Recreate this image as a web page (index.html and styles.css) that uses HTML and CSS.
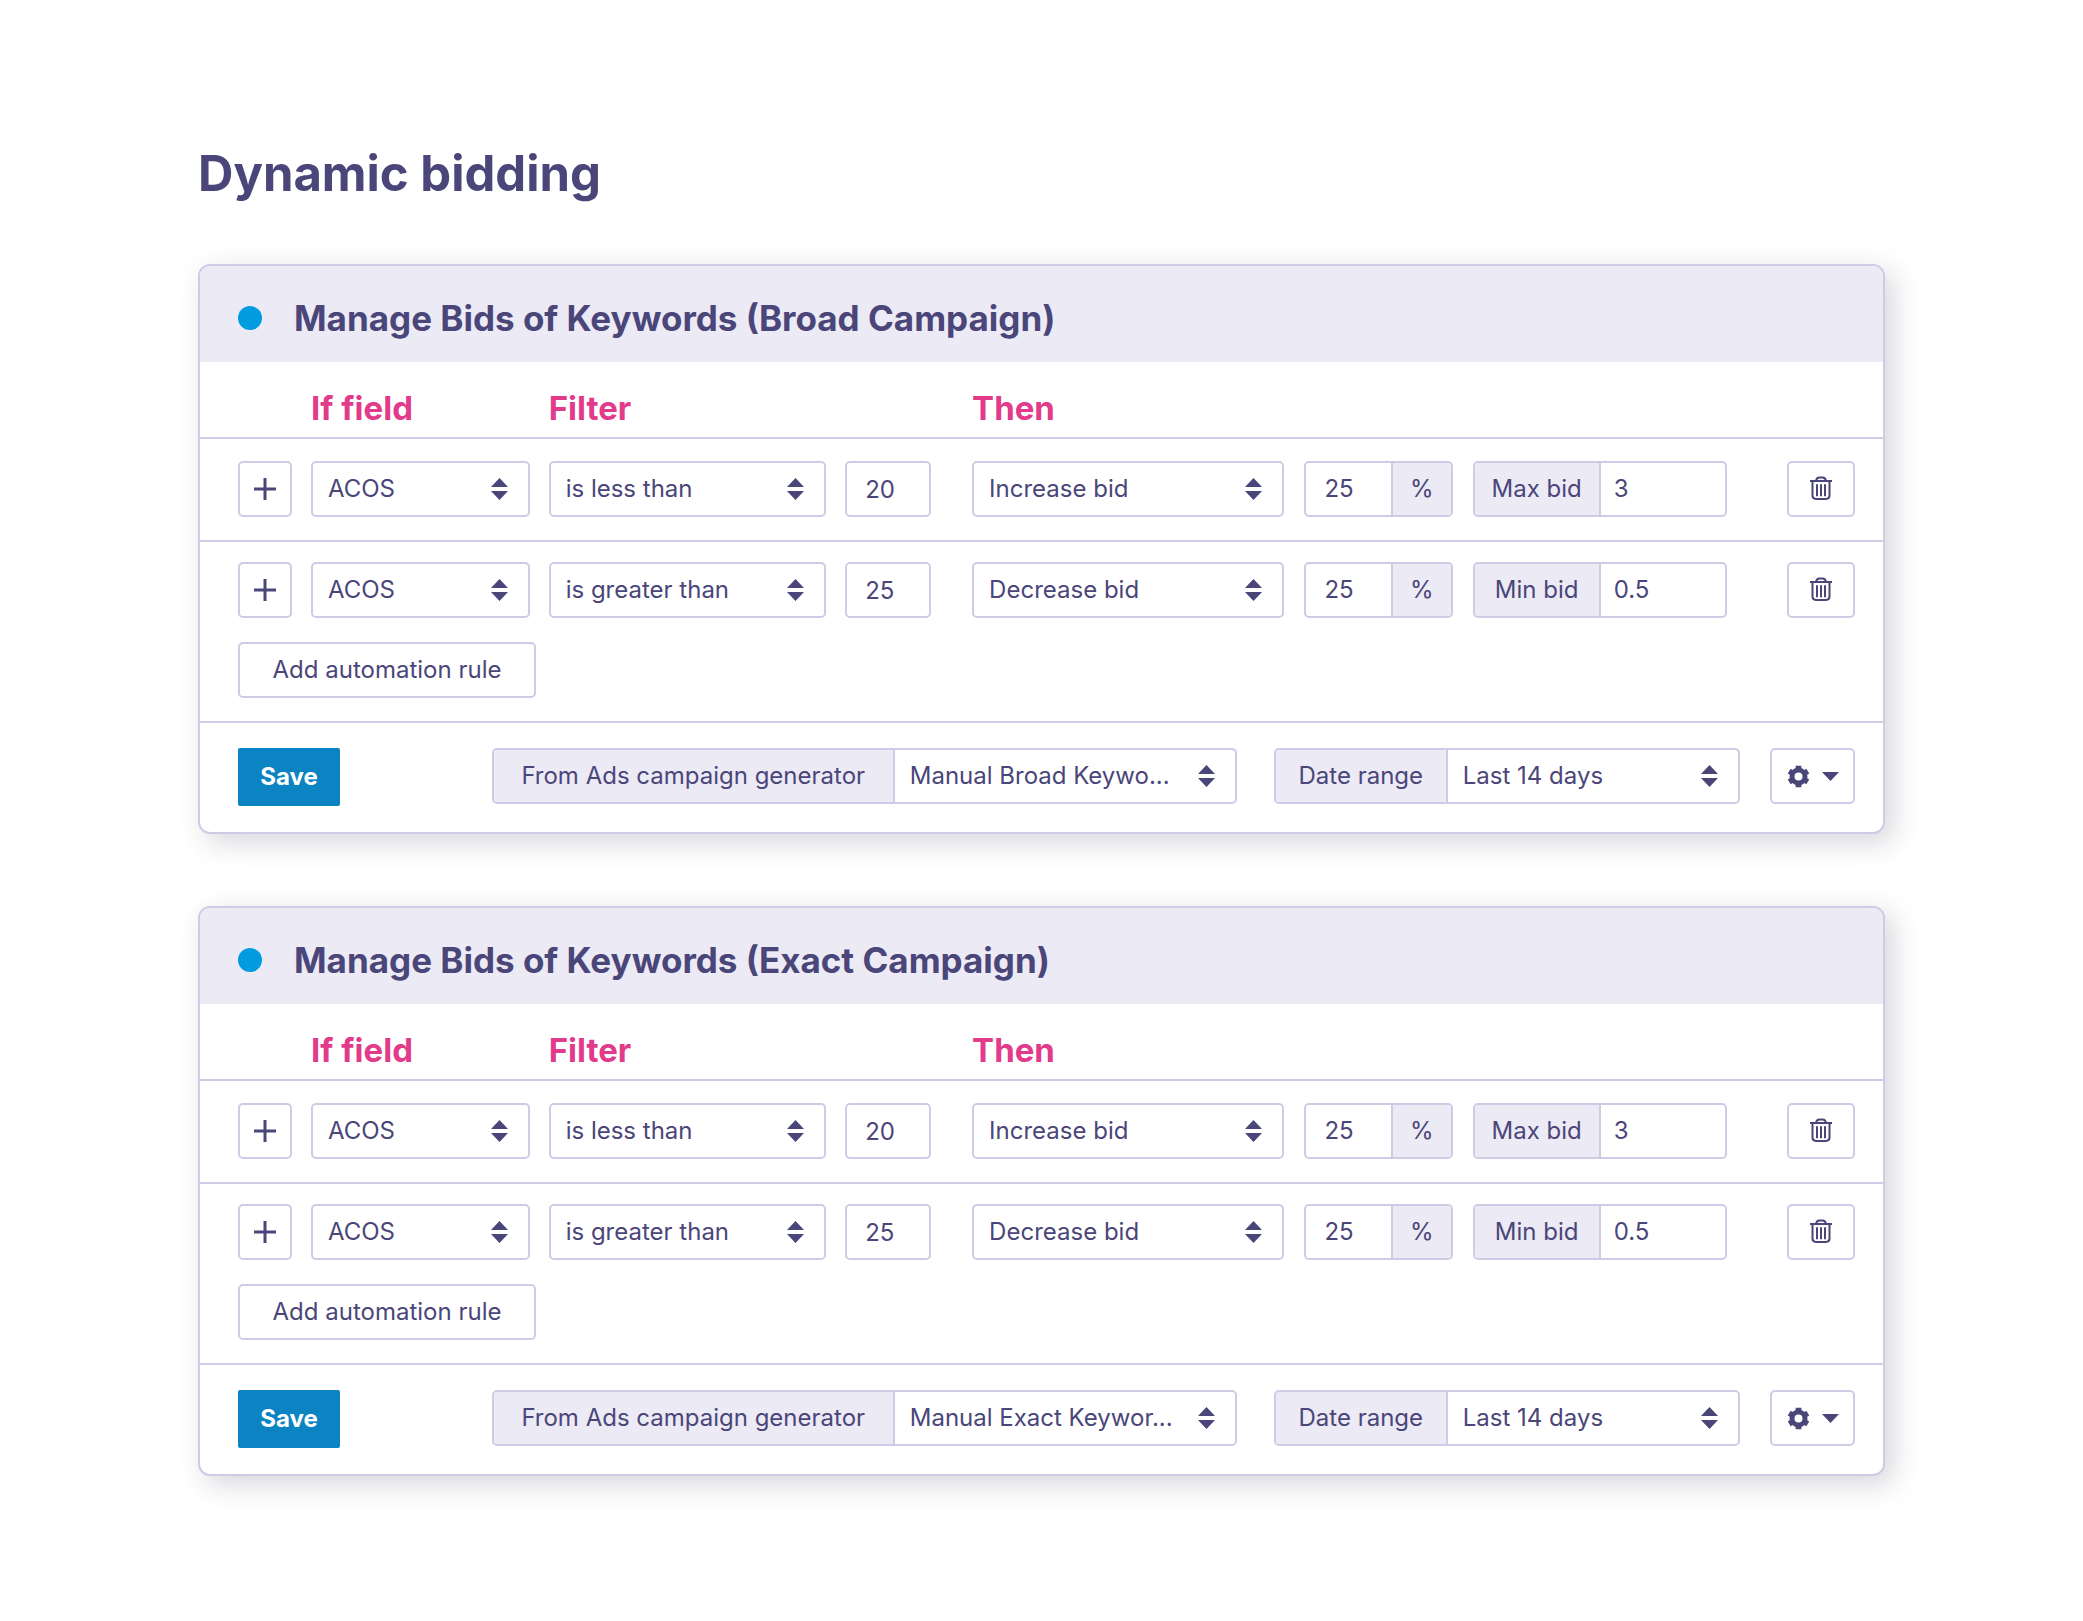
FILE: index.html
```html
<!DOCTYPE html>
<html lang="en">
<head>
<meta charset="utf-8">
<meta name="viewport" content="width=device-width, initial-scale=1">
<title>Dynamic bidding</title>
<link rel="stylesheet" href="styles.css">
</head>
<body>
<svg class="sprite" aria-hidden="true">
  <symbol id="i-sort" viewBox="0 0 17 22"><path d="M8.500 0L17 9H0zM0 13h17l-8.500 9z"/></symbol>
  <symbol id="i-plus" viewBox="0 0 24 24"><path d="M12 1v22M1 12h22" fill="none" stroke="currentColor" stroke-width="3"/></symbol>
  <symbol id="i-trash" viewBox="0 0 22 24"><path d="M0 5h22M6 5c.4-2.600 1.600-3.600 3.400-3.600h3.200c1.800 0 3 1 3.400 3.600M2.500 5v14.500q0 3.400 3.400 3.400h10.200q3.400 0 3.400-3.400V5M7 8.300v12M11 8.300v12M15 8.300v12" fill="none" stroke="currentColor" stroke-width="2"/></symbol>
  <symbol id="i-gear" viewBox="0 0 24 24"><g fill="none" stroke="currentColor"><circle cx="12" cy="12" r="6.800" stroke-width="5.200"/><path stroke-width="6" d="M12 4.500V.8M12 19.500v3.700M18.500 8.250l3.200-1.850M5.500 15.750l-3.200 1.850M18.500 15.750l3.200 1.850M5.500 8.250L2.300 6.400"/></g></symbol>
  <symbol id="i-caret" viewBox="0 0 17 9"><path d="M0 0h17L8.500 9z"/></symbol>
</svg>

<main class="page">
  <h1 class="page-title">Dynamic bidding</h1>

  <form class="card">
    <header class="card-head"><span class="status-dot"></span><h2 class="card-title">Manage Bids of Keywords (Broad Campaign)</h2></header>
    <div class="rule-grid column-heads">
      <div class="rule-if"><span></span><span>If field</span><span>Filter</span></div>
      <div class="rule-then"><span>Then</span></div>
    </div>
    <div class="rule-grid rule-row">
      <div class="rule-if">
        <button type="button" class="btn" aria-label="Add condition"><svg class="icon icon-plus"><use href="#i-plus"/></svg></button>
        <span class="select"><select aria-label="Field"><option>ACOS</option></select><svg class="icon icon-sort"><use href="#i-sort"/></svg></span>
        <span class="select"><select aria-label="Filter"><option>is less than</option></select><svg class="icon icon-sort"><use href="#i-sort"/></svg></span>
        <input class="box" aria-label="Filter value" value="20">
      </div>
      <div class="rule-then">
        <span class="select"><select aria-label="Action"><option>Increase bid</option></select><svg class="icon icon-sort"><use href="#i-sort"/></svg></span>
        <span class="group"><input id="a1-pct" value="25"><label class="addon addon-end" for="a1-pct">%</label></span>
        <span class="group"><label class="addon addon-bid" for="a1-lim">Max bid</label><input class="tight" id="a1-lim" value="3"></span>
        <button type="button" class="btn btn-delete" aria-label="Delete rule"><svg class="icon icon-trash"><use href="#i-trash"/></svg></button>
      </div>
    </div>
    <div class="rule-grid rule-row">
      <div class="rule-if">
        <button type="button" class="btn" aria-label="Add condition"><svg class="icon icon-plus"><use href="#i-plus"/></svg></button>
        <span class="select"><select aria-label="Field"><option>ACOS</option></select><svg class="icon icon-sort"><use href="#i-sort"/></svg></span>
        <span class="select"><select aria-label="Filter"><option>is greater than</option></select><svg class="icon icon-sort"><use href="#i-sort"/></svg></span>
        <input class="box" aria-label="Filter value" value="25">
      </div>
      <div class="rule-then">
        <span class="select"><select aria-label="Action"><option>Decrease bid</option></select><svg class="icon icon-sort"><use href="#i-sort"/></svg></span>
        <span class="group"><input id="a2-pct" value="25"><label class="addon addon-end" for="a2-pct">%</label></span>
        <span class="group"><label class="addon addon-bid" for="a2-lim">Min bid</label><input class="tight" id="a2-lim" value="0.5"></span>
        <button type="button" class="btn btn-delete" aria-label="Delete rule"><svg class="icon icon-trash"><use href="#i-trash"/></svg></button>
      </div>
    </div>
    <div class="add-row"><button type="button" class="btn btn-add">Add automation rule</button></div>
    <footer class="card-foot">
      <button type="button" class="btn-save">Save</button>
      <span class="group"><label class="addon addon-source" for="a-src">From Ads campaign generator</label><span class="select"><select id="a-src"><option>Manual Broad Keywo...</option></select><svg class="icon icon-sort"><use href="#i-sort"/></svg></span></span>
      <div class="foot-end">
        <span class="group"><label class="addon addon-date" for="a-date">Date range</label><span class="select"><select id="a-date"><option>Last 14 days</option></select><svg class="icon icon-sort"><use href="#i-sort"/></svg></span></span>
        <button type="button" class="btn btn-settings" aria-label="Settings"><svg class="icon icon-gear"><use href="#i-gear"/></svg><svg class="icon icon-caret"><use href="#i-caret"/></svg></button>
      </div>
    </footer>
  </form>

  <form class="card">
    <header class="card-head"><span class="status-dot"></span><h2 class="card-title">Manage Bids of Keywords (Exact Campaign)</h2></header>
    <div class="rule-grid column-heads">
      <div class="rule-if"><span></span><span>If field</span><span>Filter</span></div>
      <div class="rule-then"><span>Then</span></div>
    </div>
    <div class="rule-grid rule-row">
      <div class="rule-if">
        <button type="button" class="btn" aria-label="Add condition"><svg class="icon icon-plus"><use href="#i-plus"/></svg></button>
        <span class="select"><select aria-label="Field"><option>ACOS</option></select><svg class="icon icon-sort"><use href="#i-sort"/></svg></span>
        <span class="select"><select aria-label="Filter"><option>is less than</option></select><svg class="icon icon-sort"><use href="#i-sort"/></svg></span>
        <input class="box" aria-label="Filter value" value="20">
      </div>
      <div class="rule-then">
        <span class="select"><select aria-label="Action"><option>Increase bid</option></select><svg class="icon icon-sort"><use href="#i-sort"/></svg></span>
        <span class="group"><input id="b1-pct" value="25"><label class="addon addon-end" for="b1-pct">%</label></span>
        <span class="group"><label class="addon addon-bid" for="b1-lim">Max bid</label><input class="tight" id="b1-lim" value="3"></span>
        <button type="button" class="btn btn-delete" aria-label="Delete rule"><svg class="icon icon-trash"><use href="#i-trash"/></svg></button>
      </div>
    </div>
    <div class="rule-grid rule-row">
      <div class="rule-if">
        <button type="button" class="btn" aria-label="Add condition"><svg class="icon icon-plus"><use href="#i-plus"/></svg></button>
        <span class="select"><select aria-label="Field"><option>ACOS</option></select><svg class="icon icon-sort"><use href="#i-sort"/></svg></span>
        <span class="select"><select aria-label="Filter"><option>is greater than</option></select><svg class="icon icon-sort"><use href="#i-sort"/></svg></span>
        <input class="box" aria-label="Filter value" value="25">
      </div>
      <div class="rule-then">
        <span class="select"><select aria-label="Action"><option>Decrease bid</option></select><svg class="icon icon-sort"><use href="#i-sort"/></svg></span>
        <span class="group"><input id="b2-pct" value="25"><label class="addon addon-end" for="b2-pct">%</label></span>
        <span class="group"><label class="addon addon-bid" for="b2-lim">Min bid</label><input class="tight" id="b2-lim" value="0.5"></span>
        <button type="button" class="btn btn-delete" aria-label="Delete rule"><svg class="icon icon-trash"><use href="#i-trash"/></svg></button>
      </div>
    </div>
    <div class="add-row"><button type="button" class="btn btn-add">Add automation rule</button></div>
    <footer class="card-foot">
      <button type="button" class="btn-save">Save</button>
      <span class="group"><label class="addon addon-source" for="b-src">From Ads campaign generator</label><span class="select"><select id="b-src"><option>Manual Exact Keywor...</option></select><svg class="icon icon-sort"><use href="#i-sort"/></svg></span></span>
      <div class="foot-end">
        <span class="group"><label class="addon addon-date" for="b-date">Date range</label><span class="select"><select id="b-date"><option>Last 14 days</option></select><svg class="icon icon-sort"><use href="#i-sort"/></svg></span></span>
        <button type="button" class="btn btn-settings" aria-label="Settings"><svg class="icon icon-gear"><use href="#i-gear"/></svg><svg class="icon icon-caret"><use href="#i-caret"/></svg></button>
      </div>
    </footer>
  </form>
</main>
</body>
</html>
```
FILE: styles.css
```css
:root {
  --ink: #4a4679;
  --line: #cfcbe7;
  --tint: #eceaf5;
  --pink: #e23b8b;
  --blue: #0c84c3;
}

* { box-sizing: border-box; }

body {
  margin: 0;
  background: #fff;
  color: var(--ink);
  font: 24px/32px Inter, "Open Sans", sans-serif;
}

button, input, select { font: inherit; color: inherit; margin: 0; }

.sprite { display: none; }
.icon { display: block; fill: currentColor; pointer-events: none; }
.icon-plus { width: 24px; height: 24px; }
.icon-sort { width: 17px; height: 22px; }
.icon-trash { width: 22px; height: 24px; }
.icon-gear { width: 23px; height: 23px; }
.icon-caret { width: 17px; height: 9px; }

.page { padding: 144px 198px 0; }

.page-title {
  margin: 0 0 60px;
  font-size: 49px;
  line-height: 60px;
  font-weight: 700;
}

.card {
  margin-bottom: 72px;
  border: 2px solid var(--line);
  border-radius: 12px;
  background: #fff;
  box-shadow: 8px 8px 28px rgba(50, 45, 75, 0.2);
}

.card-head {
  display: flex;
  align-items: center;
  gap: 32px;
  height: 96px;
  padding: 8px 38px 0;
  border-radius: 10px 10px 0 0;
  background: var(--tint);
}

.status-dot { width: 24px; height: 24px; border-radius: 50%; background: #009cdf; }
.card-title { margin: 0; font-size: 35px; line-height: 40px; font-weight: 700; }

.rule-grid {
  display: grid;
  grid-template-columns: 694fr 884fr;
  gap: 41px;
  padding: 0 28px 0 38px;
}

.rule-if {
  display: grid;
  grid-template-columns: 54px 219fr 278fr 86fr;
  gap: 19px;
}

.rule-then {
  display: grid;
  grid-template-columns: 312fr 148fr 254fr 108px;
  gap: 20px;
}

.column-heads {
  padding-top: 26px;
  padding-bottom: 9px;
  border-bottom: 2px solid var(--line);
  color: var(--pink);
  font-size: 33px;
  line-height: 40px;
  font-weight: 700;
}

.rule-row { padding-top: 22px; padding-bottom: 23px; }
.rule-row + .rule-row { padding-top: 20px; padding-bottom: 24px; border-top: 2px solid var(--line); }

.btn, .box, .group, .select {
  height: 56px;
  min-width: 0;
  border: 2px solid var(--line);
  border-radius: 5px;
  background: #fff;
}

.btn {
  display: flex;
  align-items: center;
  justify-content: center;
  padding: 0;
}

.btn-delete { width: 68px; padding-bottom: 3px; justify-self: end; }
.btn-add { width: 298px; }
.btn-settings { gap: 12px; }

.box { width: 100%; padding: 0 18px; }

.select { display: grid; align-items: center; }
.select > * { grid-area: 1 / 1; }
.select > svg { justify-self: end; margin-right: 20px; }
.select select {
  width: 100%;
  height: 100%;
  min-width: 0;
  padding: 0 44px 0 15px;
  border: 0;
  background: transparent;
  appearance: none;
}

.group { display: flex; overflow: hidden; }
.group input {
  flex: 1;
  width: 0;
  padding: 0 18px;
  border: 0;
  background: transparent;
}
.group .tight { padding: 0 13px; }
.group .select { flex: 1; height: auto; border: 0; }

.addon {
  display: flex;
  align-items: center;
  justify-content: center;
  border-right: 2px solid var(--line);
  background: var(--tint);
  white-space: nowrap;
}
.addon-end { width: 60px; border-right: 0; border-left: 2px solid var(--line); }
.addon-bid { width: 126px; }
.addon-source { width: 401px; }
.addon-date { width: 172px; }

.add-row { padding: 0 38px 23px; }

.card-foot {
  display: grid;
  grid-template-columns: 217fr 746fr 582fr;
  gap: 37px;
  padding: 25px 28px 26px 38px;
  border-top: 2px solid var(--line);
}

.foot-end { display: grid; grid-template-columns: 1fr 85px; gap: 30px; }

.btn-save {
  justify-self: start;
  width: 102px;
  height: 58px;
  padding: 0;
  border: 0;
  border-radius: 2px;
  background: var(--blue);
  color: #fff;
  font-weight: 700;
}
```
